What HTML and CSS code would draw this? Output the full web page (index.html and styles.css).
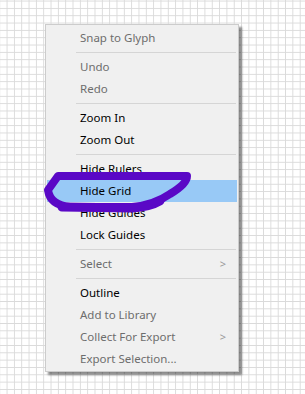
FILE: index.html
```html
<!DOCTYPE html>
<html lang="en">
<head>
    <meta charset="UTF-8">
    <title>Context Menu</title>
    <link rel="stylesheet" href="styles.css">
</head>
<body>

    <!-- Kontextmenü auf dem Raster -->
    <div class="canvas">
        <div class="menu">
            <div class="item disabled">Snap to Glyph</div>
            <div class="sep"></div>
            <div class="item disabled">Undo</div>
            <div class="item disabled">Redo</div>
            <div class="sep"></div>
            <div class="item">Zoom In</div>
            <div class="item">Zoom Out</div>
            <div class="sep"></div>
            <div class="item">Hide Rulers</div>
            <div class="item active">Hide Grid</div>
            <div class="item">Hide Guides</div>
            <div class="item">Lock Guides</div>
            <div class="sep"></div>
            <div class="item disabled">Select <span class="arrow">&gt;</span></div>
            <div class="sep"></div>
            <div class="item">Outline</div>
            <div class="item disabled">Add to Library</div>
            <div class="item disabled">Collect For Export <span class="arrow">&gt;</span></div>
            <div class="item disabled">Export Selection...</div>

            <!-- Markierung um "Hide Grid" -->
            <svg class="scribble" width="200" height="60" viewBox="40 160 200 60">
                <path d="M 187 176 L 58 176 L 48 190 Q 50 205 70 207 L 132 207 Q 154 205 170 194 Q 187 184 187 176"
                      fill="none" stroke="#5a08c6" stroke-width="8" stroke-linejoin="round" stroke-linecap="round"/>
                <path d="M 62 207 L 132 208 Q 150 207 160 201"
                      fill="none" stroke="#5a08c6" stroke-width="9" stroke-linecap="round"/>
            </svg>
        </div>
    </div>

</body>
</html>
```

FILE: styles.css
```css
body {
    margin: 0;
    font-family: 'Noto Sans', 'Open Sans', sans-serif;
    background-color: #ffffff;
}

/* Raster im Hintergrund */
.canvas {
    height: 394px;
    padding: 24px 0 0 45px;
    box-sizing: border-box;
    background-color: #ffffff;
    background-image:
        linear-gradient(to right, #dadada 1px, transparent 1px),
        linear-gradient(to bottom, #dadada 1px, transparent 1px);
    background-size: 7.333px 7.333px;
    background-position: 6.6px 0.6px;
}

.menu {
    position: relative;
    width: 191px;
    padding: 2px 0 1px 1px;
    background-color: #f0f0f0;
    border: 1px solid #cccccc;
    box-shadow: 3px 3px 2px rgba(0, 0, 0, 0.45);
}

.item {
    position: relative;
    height: 22px;
    line-height: 22px;
    padding-left: 33px;
    margin-right: 1px;
    font-size: 11.5px;
    color: #000000;
}

.item.disabled {
    color: #6d6d6d;
}

.item.active {
    background-color: #98c9f6;
}

.arrow {
    position: absolute;
    right: 11px;
    top: 0;
    font-size: 11px;
    color: #9a9a9a;
}

.sep {
    height: 1px;
    margin: 3px 2px 3px 29px;
    background-color: #d5d5d5;
}

/* Markierung liegt über dem Menü */
.scribble {
    position: absolute;
    left: -6px;
    top: 135px;
    overflow: visible;
}
```
